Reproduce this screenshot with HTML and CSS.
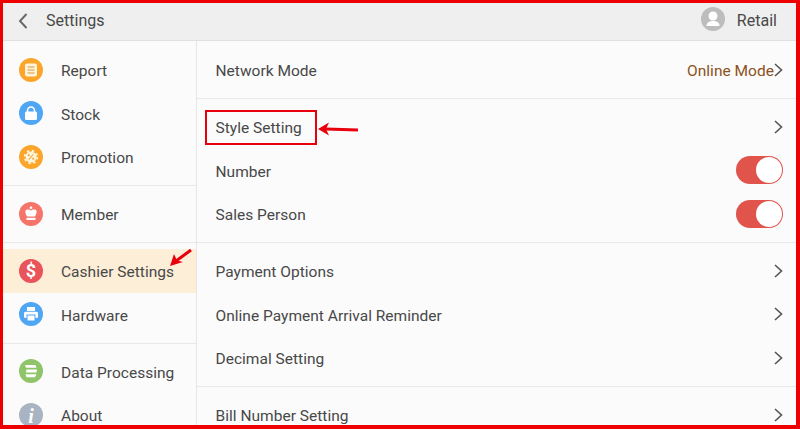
FILE: index.html
```html
<!DOCTYPE html>
<html lang="en">
<head>
<meta charset="utf-8">
<title>Settings</title>
<link rel="stylesheet" href="styles.css">
</head>
<body>
<div class="frame">
  <header class="topbar">
    <div class="topbar-left">
      <svg class="back" viewBox="0 0 10 16" width="10" height="16"><path d="M8.500 1 2 8l6.500 7" fill="none" stroke="#666" stroke-width="1.900"/></svg>
      <span>Settings</span>
    </div>
    <div class="topbar-right">
      <svg class="avatar" viewBox="0 0 24 24" width="24" height="24"><circle cx="12" cy="12" r="12" fill="#bdbdbd"/><circle cx="12" cy="9" r="4.500" fill="#fff"/><path d="M5.500 19c0-3.500 2.500-5 6.500-5s6.500 1.500 6.500 5z" fill="#fff"/></svg>
      <span>Retail</span>
    </div>
  </header>
  <div class="body">
    <nav class="sidebar">
      <div class="group">
        <div class="nav-row">
          <svg class="ic" viewBox="0 0 24 24"><circle cx="12" cy="12" r="12" fill="#fba62b"/><rect x="6" y="5.500" width="12" height="13" rx="2" fill="#fff3da"/><path d="M8.500 9h7M8.500 12h7M8.500 15h7" stroke="#e3b875" stroke-width="1.300"/></svg>
          <span>Report</span>
        </div>
        <div class="nav-row">
          <svg class="ic" viewBox="0 0 24 24"><circle cx="12" cy="12" r="12" fill="#4fa6f3"/><path d="M8.500 11V9.500a3.500 3.500 0 0 1 7 0V11" fill="none" stroke="#fff" stroke-width="1.600"/><rect x="6" y="10.500" width="12" height="8.500" rx="1.500" fill="#fff"/></svg>
          <span>Stock</span>
        </div>
        <div class="nav-row">
          <svg class="ic" viewBox="0 0 24 24"><circle cx="12" cy="12" r="12" fill="#fba62b"/><circle cx="12" cy="12" r="5.500" fill="#fff3da"/><circle cx="12" cy="12" r="6.300" fill="none" stroke="#fff3da" stroke-width="1.800" stroke-dasharray="2.470 2.470"/><path d="M9.800 14.500l4.400-5" stroke="#f0a030" stroke-width="1.100"/><circle cx="9.800" cy="10.200" r="1" fill="#f0a030"/><circle cx="14.200" cy="13.800" r="1" fill="#f0a030"/></svg>
          <span>Promotion</span>
        </div>
      </div>
      <div class="group">
        <div class="nav-row">
          <svg class="ic" viewBox="0 0 24 24"><circle cx="12" cy="12" r="12" fill="#f6756a"/><circle cx="12" cy="5.800" r="1.300" fill="#fff"/><path d="M12 8.800c-1-1.300-3-1.600-4.500-1-1.600.8-1.600 3 .6 6.700h7.800c2.200-3.700 2.200-5.900.6-6.700-1.500-.6-3.500-.3-4.500 1z" fill="#fff"/><rect x="7.500" y="15.800" width="9" height="2.200" fill="#fff"/></svg>
          <span>Member</span>
        </div>
      </div>
      <div class="group">
        <div class="nav-row active">
          <svg class="ic" viewBox="0 0 24 24"><circle cx="12" cy="12" r="12" fill="#e8545a"/><text class="dollar" x="12" y="18" text-anchor="middle">$</text></svg>
          <span>Cashier Settings</span>
        </div>
        <div class="nav-row">
          <svg class="ic" viewBox="0 0 24 24"><circle cx="12" cy="12" r="12" fill="#4fa6f3"/><rect x="8" y="5" width="8" height="4" fill="#fff"/><rect x="5" y="9.800" width="14" height="6.200" rx="1.500" fill="#fff"/><rect x="8" y="13" width="8" height="6" fill="#fff" stroke="#4fa6f3" stroke-width="1"/></svg>
          <span>Hardware</span>
        </div>
      </div>
      <div class="group">
        <div class="nav-row">
          <svg class="ic" viewBox="0 0 24 24"><circle cx="12" cy="12" r="12" fill="#8fc468"/><path d="M6 6h10.500l1 2.800H7zM7.500 10.500H18l-.5 3H7zM6.500 15.200h11l-1.500 3H7.500z" fill="#fff"/></svg>
          <span>Data Processing</span>
        </div>
        <div class="nav-row">
          <svg class="ic" viewBox="0 0 24 24"><circle cx="12" cy="12" r="12" fill="#a9b4c2"/><text class="info" x="12" y="19.500" text-anchor="middle">i</text></svg>
          <span>About</span>
        </div>
      </div>
    </nav>
    <main class="content">
      <section class="group">
        <div class="row"><span>Network Mode</span><div class="row-end"><span class="value">Online Mode</span><svg class="chev" viewBox="0 0 9 14"><path d="M1 1l6.500 6L1 13" fill="none" stroke="#555" stroke-width="1.600"/></svg></div></div>
      </section>
      <section class="group">
        <div class="row"><span>Style Setting</span><svg class="chev" viewBox="0 0 9 14"><path d="M1 1l6.500 6L1 13" fill="none" stroke="#555" stroke-width="1.600"/></svg></div>
        <div class="row"><span>Number</span><div class="toggle"><div class="knob"></div></div></div>
        <div class="row"><span>Sales Person</span><div class="toggle"><div class="knob"></div></div></div>
      </section>
      <section class="group">
        <div class="row"><span>Payment Options</span><svg class="chev" viewBox="0 0 9 14"><path d="M1 1l6.500 6L1 13" fill="none" stroke="#555" stroke-width="1.600"/></svg></div>
        <div class="row"><span>Online Payment Arrival Reminder</span><svg class="chev" viewBox="0 0 9 14"><path d="M1 1l6.500 6L1 13" fill="none" stroke="#555" stroke-width="1.600"/></svg></div>
        <div class="row"><span>Decimal Setting</span><svg class="chev" viewBox="0 0 9 14"><path d="M1 1l6.500 6L1 13" fill="none" stroke="#555" stroke-width="1.600"/></svg></div>
      </section>
      <section class="group">
        <div class="row"><span>Bill Number Setting</span><svg class="chev" viewBox="0 0 9 14"><path d="M1 1l6.500 6L1 13" fill="none" stroke="#555" stroke-width="1.600"/></svg></div>
      </section>
    </main>
  </div>
  <div class="callout"></div>
  <svg class="arrows" viewBox="0 0 800 429" width="800" height="429">
    <path d="M358 130 326 129" stroke="#e8000d" stroke-width="3" fill="none"/>
    <path d="M318 129l11-6.500-3 6.500 3 6.500z" fill="#e8000d"/>
    <path d="M191 250l-15 11" stroke="#e8000d" stroke-width="3" fill="none"/>
    <path d="M170 266l4-12 3 6.500 6 1.500z" fill="#e8000d"/>
  </svg>
</div>
</body>
</html>
```
FILE: styles.css
```css
* { box-sizing: border-box; }
html, body { margin: 0; padding: 0; }
body { width: 800px; height: 429px; overflow: hidden; font-family: Roboto, "Liberation Sans", sans-serif; font-size: 15.500px; letter-spacing: 0.020px; color: #484848; }
.frame { position: relative; width: 800px; height: 429px; border: solid #ee0000; border-width: 3px 4px 4px 3px; background: #fbfbfb; overflow: hidden; display: flex; flex-direction: column; }
.frame > .arrows, .frame > .callout { position: absolute; }
.topbar { flex: none; height: 38px; background: #efefef; border-bottom: 1px solid #e0e0e0; display: flex; align-items: center; justify-content: space-between; padding: 0 19px 2px 15px; font-size: 16px; }
.topbar-left { display: flex; align-items: center; gap: 18px; }
.topbar-right { display: flex; align-items: center; gap: 12px; }
.avatar { margin-bottom: 3px; }
.back { display: block; }
.body { flex: 1; display: flex; min-height: 0; }
.sidebar { flex: none; width: 194px; border-right: 1px solid #e6e6e6; }
.content { flex: 1; min-width: 0; }
.group { padding: 6px 0 6.500px; border-bottom: 1px solid #e8e8e8; }
.group:first-child { padding-top: 7px; }
.group:last-child { border-bottom: 0; }
.nav-row { height: 43.500px; display: flex; align-items: center; gap: 18px; padding-left: 16px; }
.nav-row > span, .row > span, .value { padding-top: 2.800px; }
.nav-row.active { background: #fdeed8; }
.ic { width: 24px; height: 24px; flex: none; }
.dollar { font: 700 18px Roboto, sans-serif; fill: #fff; }
.info { font: italic 700 20px "Liberation Serif", serif; fill: #fff; }
.row { height: 43.500px; display: flex; align-items: center; justify-content: space-between; padding: 0 13px 0 18.500px; }
.row-end { display: flex; align-items: center; }
.value { color: #8b5220; }
.chev { width: 9px; height: 14px; flex: none; }
.toggle { width: 47px; height: 28px; border-radius: 14px; background: #e0544c; padding: 1px; display: flex; justify-content: flex-end; }
.knob { width: 26px; height: 26px; border-radius: 50%; background: #fff; }
.callout { left: 202px; top: 107px; width: 112px; height: 35px; border: 2px solid #e8000d; }
.arrows { left: -3px; top: -3px; pointer-events: none; }
```
